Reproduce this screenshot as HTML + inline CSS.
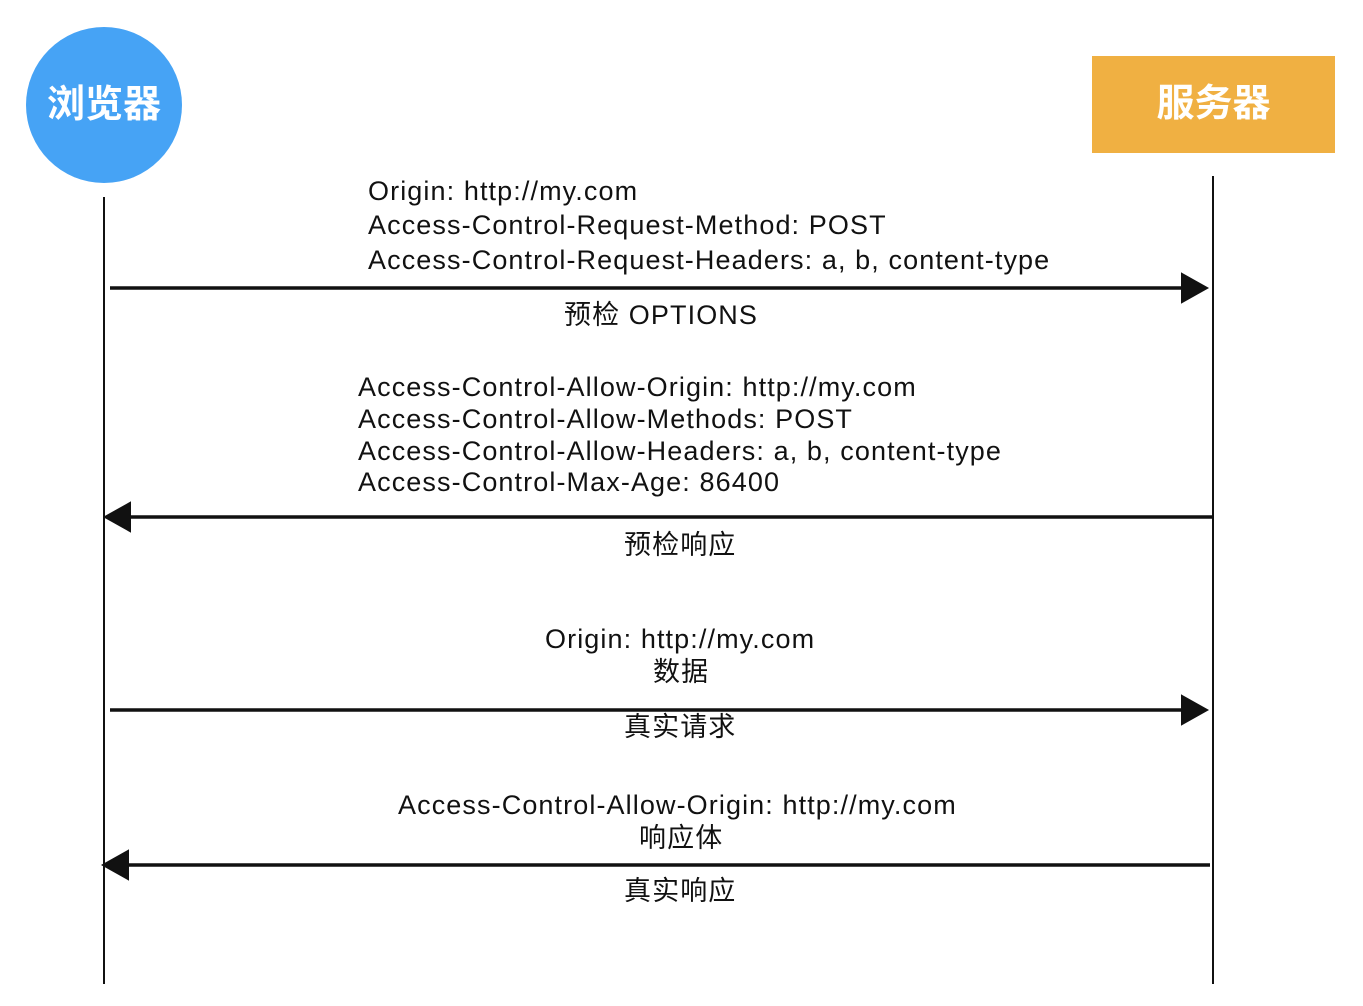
<!DOCTYPE html>
<html><head><meta charset="utf-8"><style>
body{margin:0;width:1363px;height:1006px;background:#fff;position:relative;overflow:hidden;font-family:"Liberation Sans","Noto Sans CJK SC",sans-serif;color:#111}
.t{position:absolute;font-size:27px;line-height:32px;white-space:nowrap;letter-spacing:1.1px}
</style></head><body>
<div style="position:absolute;left:26px;top:27px;width:156px;height:156px;border-radius:50%;background:#46a3f5;color:#fff;font-size:38px;font-weight:bold;line-height:156px;text-align:center">浏览器</div>
<div style="position:absolute;left:1092px;top:56px;width:243px;height:97px;background:#f0b042;color:#fff;font-size:38px;font-weight:bold;line-height:97px;text-align:center">服务器</div>
<svg style="position:absolute;left:0;top:0" width="1363" height="1006">
<g stroke="#111" fill="#111">
<line x1="104" y1="197" x2="104" y2="984" stroke-width="2"/>
<line x1="1213" y1="176" x2="1213" y2="984" stroke-width="2"/>
<line x1="110" y1="288" x2="1190" y2="288" stroke-width="3.5"/>
<polygon points="1182,274 1207,288 1182,302" stroke-width="2"/>
<line x1="120" y1="517" x2="1213" y2="517" stroke-width="3.5"/>
<polygon points="130,503 105,517 130,531" stroke-width="2"/>
<line x1="110" y1="710" x2="1190" y2="710" stroke-width="3.5"/>
<polygon points="1182,696 1207,710 1182,724" stroke-width="2"/>
<line x1="120" y1="865" x2="1210" y2="865" stroke-width="3.5"/>
<polygon points="128,851 103,865 128,879" stroke-width="2"/>
</g></svg>
<div class="t" style="left:368px;top:175px">Origin: http://my.com</div>
<div class="t" style="left:368px;top:209px">Access-Control-Request-Method: POST</div>
<div class="t" style="left:368px;top:244px">Access-Control-Request-Headers: a, b, content-type</div>
<div class="t" style="left:564px;top:299px">预检 OPTIONS</div>
<div class="t" style="left:358px;top:371px">Access-Control-Allow-Origin: http://my.com</div>
<div class="t" style="left:358px;top:403px">Access-Control-Allow-Methods: POST</div>
<div class="t" style="left:358px;top:435px">Access-Control-Allow-Headers: a, b, content-type</div>
<div class="t" style="left:358px;top:466px">Access-Control-Max-Age: 86400</div>
<div class="t" style="left:624px;top:529px">预检响应</div>
<div class="t" style="left:545px;top:623px">Origin: http://my.com</div>
<div class="t" style="left:653px;top:656px">数据</div>
<div class="t" style="left:624px;top:711px">真实请求</div>
<div class="t" style="left:398px;top:789px">Access-Control-Allow-Origin: http://my.com</div>
<div class="t" style="left:639px;top:822px">响应体</div>
<div class="t" style="left:624px;top:875px">真实响应</div>
</body></html>
